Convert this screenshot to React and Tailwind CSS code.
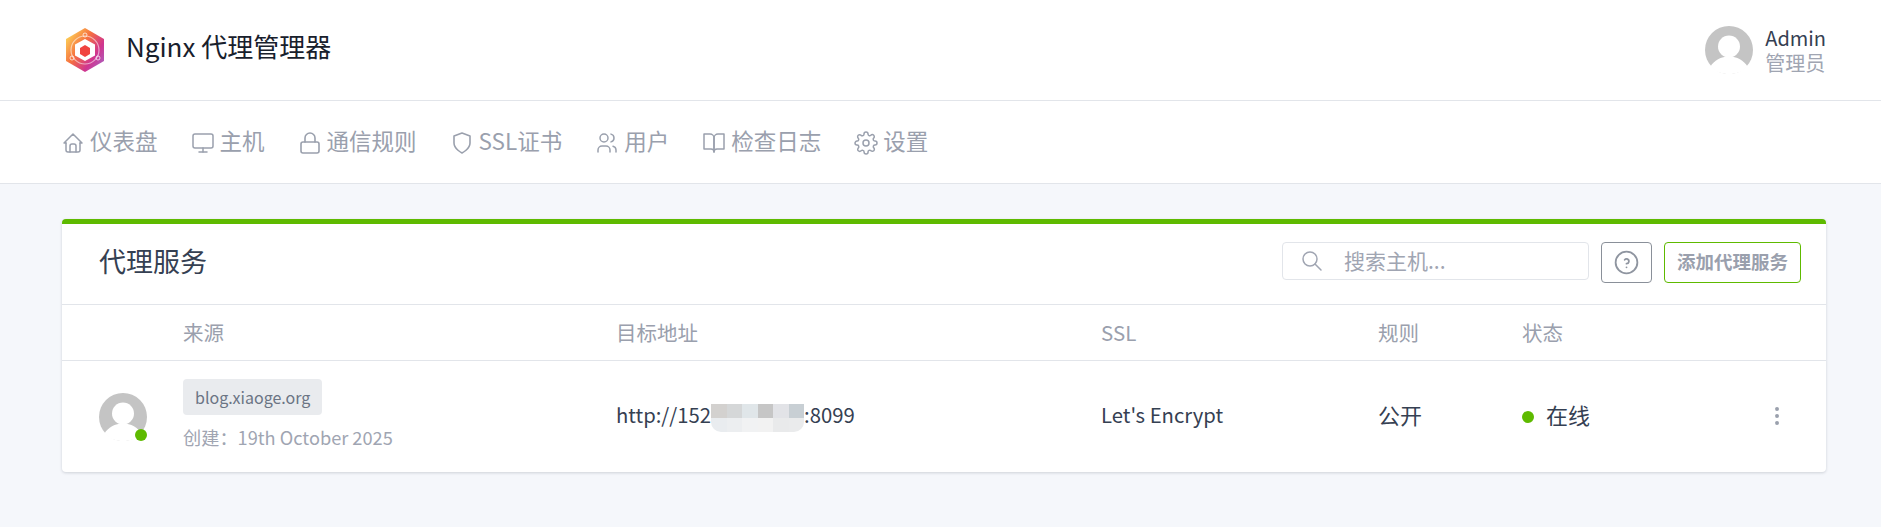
import React from "react";
import { TbHome, TbUsers, TbSearch, TbHelpCircle, TbDotsVertical } from "react-icons/tb";
import { FiMonitor, FiLock, FiShield, FiBookOpen, FiSettings } from "react-icons/fi";

const navItems = [
  { icon: TbHome, label: "仪表盘", sw: 1.5 },
  { icon: FiMonitor, label: "主机", sw: 1.5 },
  { icon: FiLock, label: "通信规则", sw: 1.6 },
  { icon: FiShield, label: "SSL证书", sw: 1.6 },
  { icon: TbUsers, label: "用户", sw: 1.5 },
  { icon: FiBookOpen, label: "检查日志", sw: 1.5 },
  { icon: FiSettings, label: "设置", sw: 1.5 },
];

const mosaic = ["bg-[#d3d1cf]", "bg-[#d5d7d8]", "bg-[#e0e6e9]", "bg-[#c6c6c6]", "bg-[#e2e3e7]", "bg-[#c8cfd4]", "bg-[#e9ecef]", "bg-[#eceef0]", "bg-[#f1f2f3]", "bg-[#f2f2f2]", "bg-[#e9eaeb]", "bg-[#eaebec]"];

const Avatar = ({ children }) => (
  <div className="relative w-12 h-12 shrink-0">
    <svg viewBox="0 0 48 48" className="w-12 h-12">
      <circle cx="24" cy="24" r="24" fill="#c4c4c4" />
      <circle cx="24" cy="20.5" r="11" fill="#fff" />
      <path d="M5.5 40.5C9 34.5 16 30.5 24 30.5s15 4 18.5 10A24 24 0 0 1 24 48 24 24 0 0 1 5.5 40.5z" fill="#fff" />
    </svg>
    {children}
  </div>
);

const Logo = () => (
  <svg viewBox="0 0 40 46" className="w-10 h-[46px]">
    <defs>
      <linearGradient id="logo-grad" x1="0" y1="0.1" x2="1" y2="0.9">
        <stop offset="0" stopColor="#fde05a" />
        <stop offset="0.4" stopColor="#f6703f" />
        <stop offset="0.72" stopColor="#d0358f" />
        <stop offset="1" stopColor="#a765c4" />
      </linearGradient>
    </defs>
    <path d="M20 1 39 12v22L20 45 1 34V12z" fill="url(#logo-grad)" />
    <circle cx="20" cy="23" r="14" fill="none" stroke="#fff" strokeOpacity="0.55" strokeWidth="1.2" />
    <circle cx="20" cy="8" r="2" fill="none" stroke="#fff" strokeOpacity="0.7" />
    <circle cx="7" cy="31" r="2" fill="none" stroke="#fff" strokeOpacity="0.7" />
    <circle cx="33" cy="31" r="2" fill="none" stroke="#fff" strokeOpacity="0.7" />
    <path d="M20 12 30 17.5v11L20 34 10 28.5v-11z" fill="#fff" />
    <path d="M20 18 25 21v6l-5 3-5-3v-6z" fill="#f0433f" />
  </svg>
);

const App = () => {
  return (
    <div className="min-h-[527px] bg-[#f5f7fb] text-[#354052] font-['Noto_Sans_CJK_SC',sans-serif]">
      <header className="h-[101px] bg-white border-b border-[#e2e5ea] pl-[65px] pr-[55px] flex items-center justify-between">
        <div className="flex items-center gap-[21px]">
          <Logo />
          <span className="text-[26px] leading-[34px] mb-[8px] text-[#18202c]">Nginx 代理管理器</span>
        </div>
        <div className="flex items-center gap-3">
          <Avatar />
          <div className="flex flex-col">
            <span className="text-[20px] leading-[25px] text-[#354052]">Admin</span>
            <span className="text-[20px] leading-[25px] text-[#a0a5b2]">管理员</span>
          </div>
        </div>
      </header>

      <nav className="h-[83px] bg-white border-b border-[#e2e5ea] pl-[61px] flex items-center gap-[33px] text-[#9aa0ad]">
        {navItems.map(({ icon: Icon, label, sw }) => (
          <a key={label} className="flex items-center gap-[5px] text-[22.5px] leading-[30px] pb-[4px]">
            <Icon className="w-6 h-6 mt-[6px]" strokeWidth={sw} />
            {label}
          </a>
        ))}
      </nav>

      <main className="pt-[35px] pl-[62px]">
        <div className="w-[1764px] bg-white rounded-[4px] border-t-[5px] border-[#5eba00] shadow-[0_1px_3px_rgba(53,64,82,0.2)]">
          <div className="h-[81px] flex items-center justify-between pl-[37px] pr-[25px] border-b border-[#e2e5ea]">
            <h3 className="text-[27px] leading-[36px] mb-[7px] text-[#354052] font-normal">代理服务</h3>
            <div className="flex items-start mb-[4px]">
              <div className="w-[307px] h-[38px] rounded-[4px] border border-[#e2e5ea] flex items-center pl-[17px] gap-[20px] text-[#a0a5b2]">
                <TbSearch className="w-6 h-6" strokeWidth={1.5} />
                <span className="text-[21px] leading-[28px] mb-[2px]">搜索主机...</span>
              </div>
              <button className="ml-3 w-[51px] h-[41px] rounded-[4px] border border-[#8a9099] flex items-center justify-center text-[#8f95a0]">
                <TbHelpCircle className="w-[29px] h-[29px]" strokeWidth={1.5} />
              </button>
              <button className="ml-3 w-[137px] h-[41px] rounded-[4px] border border-[#5eba00] text-[18.5px] leading-[26px] pb-[2px] font-bold text-[#9aa0ad]">
                添加代理服务
              </button>
            </div>
          </div>

          <div className="h-[56px] grid grid-cols-[121px_433px_485px_277px_144px_1fr] items-center border-b border-[#e2e5ea] text-[20.5px] text-[#9aa0ad]">
            <span />
            <span>来源</span>
            <span>目标地址</span>
            <span>SSL</span>
            <span>规则</span>
            <span>状态</span>
          </div>

          <div className="h-[111px] grid grid-cols-[121px_433px_485px_277px_144px_1fr] items-center text-[20.3px] text-[#354052]">
            <div className="pl-[37px]">
              <Avatar>
                <span className="absolute right-0 bottom-0 w-3 h-3 rounded-full bg-[#5eba00]" />
              </Avatar>
            </div>
            <div className="pb-[6px]">
              <span className="block w-fit h-[36px] leading-[36px] px-3 rounded-[4px] bg-[#e9ebee] text-[16px] text-[#6b7484]">blog.xiaoge.org</span>
              <div className="mt-[10px] text-[18.2px] leading-[24px] text-[#a0a5b2]">创建：19th October 2025</div>
            </div>
            <div className="flex items-center pb-[4px]">
              <span>http://152</span>
              <span className="grid grid-cols-[repeat(6,15.5px)] grid-rows-[14px_14px] mt-[6px] rounded-b-[10px] overflow-hidden">
                {mosaic.map((c, i) => (
                  <span key={i} className={c} />
                ))}
              </span>
              <span>:8099</span>
            </div>
            <div className="pb-[4px]">Let's Encrypt</div>
            <div className="pb-[5px] text-[22px]">公开</div>
            <div className="flex items-center justify-between pr-[37px]">
              <div className="flex items-center gap-[12px]">
                <span className="w-3 h-3 rounded-full bg-[#5eba00]" />
                <span className="text-[22px] leading-[30px] pb-[6px]">在线</span>
              </div>
              <TbDotsVertical className="w-[24px] h-[24px] mb-[2px] text-[#9aa0ad]" strokeWidth={2} />
            </div>
          </div>
        </div>
      </main>
    </div>
  );
};

export default App;
